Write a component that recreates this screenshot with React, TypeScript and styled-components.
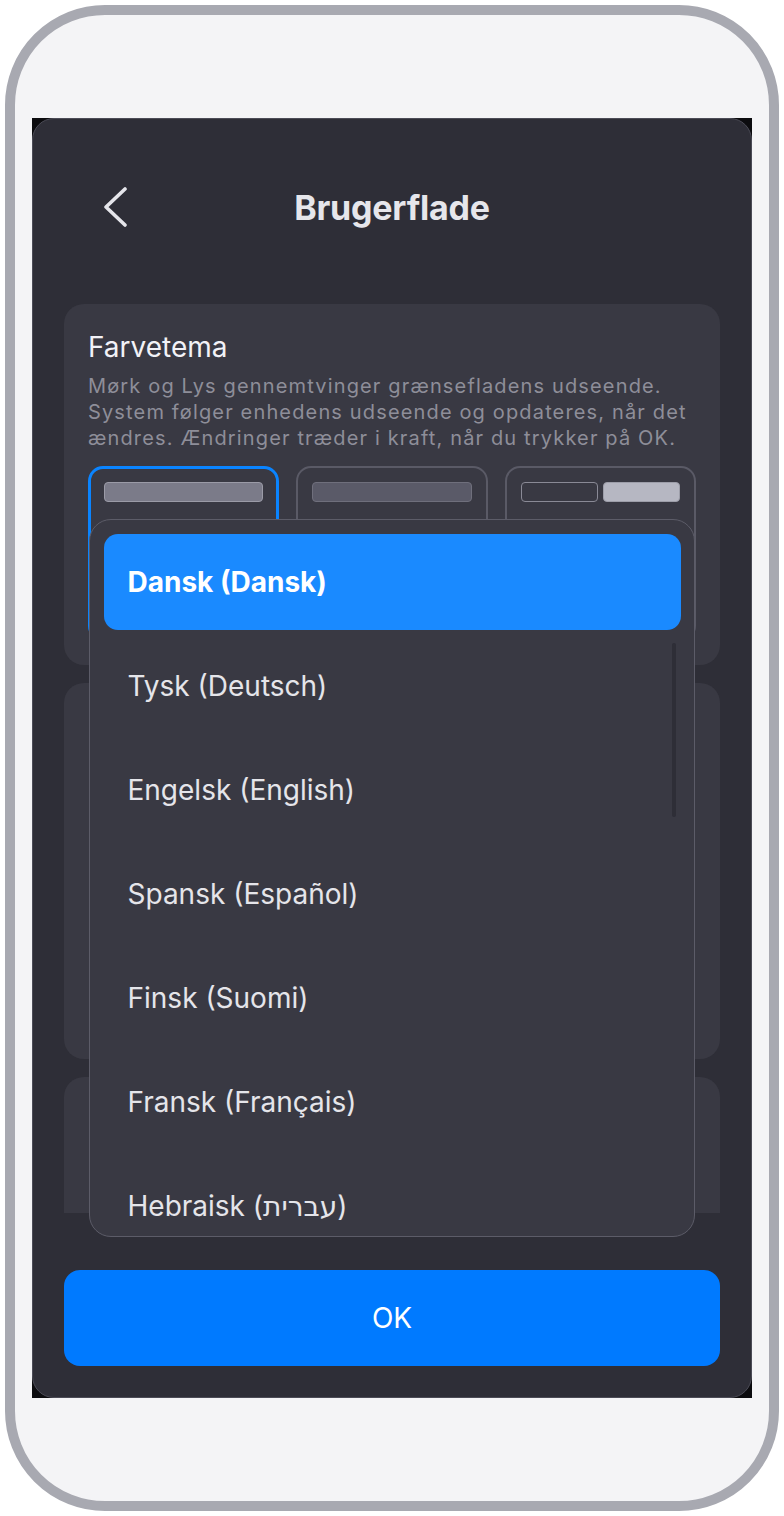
import React from 'react';
import styled, { createGlobalStyle } from 'styled-components';

const GlobalStyle = createGlobalStyle`
  html, body {
    margin: 0;
    padding: 0;
    background: #ffffff;
  }
  * {
    box-sizing: border-box;
  }
  body {
    font-family: Inter, "Noto Sans", "DejaVu Sans", sans-serif;
  }
`;

const languages = [
    'Dansk (Dansk)',
    'Tysk (Deutsch)',
    'Engelsk (English)',
    'Spansk (Español)',
    'Finsk (Suomi)',
    'Fransk (Français)',
    'Hebraisk (עברית)',
];

type Theme = 'dark' | 'light' | 'system';

const themes: { id: Theme; selected: boolean }[] = [
    { id: 'dark', selected: true },
    { id: 'light', selected: false },
    { id: 'system', selected: false },
];

export default function App() {
    return (
        <>
            <GlobalStyle />
            <PhoneFrame>
                <Screen>
                    <Panel>
                        <Header>
                            <BackButton aria-label="Tilbage">
                                <svg width="26" height="40" viewBox="0 0 26 40" fill="none">
                                    <path d="M23 2 L4 20 L23 38" stroke="#e5e5ea" strokeWidth="3.6" strokeLinecap="round" strokeLinejoin="round" />
                                </svg>
                            </BackButton>
                            <Title>Brugerflade</Title>
                            <span />
                        </Header>

                        <Scroll>
                            <Card $height={361}>
                                <CardTitle>Farvetema</CardTitle>
                                <CardText>
                                    Mørk og Lys gennemtvinger grænsefladens udseende. System følger enhedens udseende og opdateres, når det ændres. Ændringer træder i kraft, når du trykker på OK.
                                </CardText>
                                <TileGrid>
                                    {themes.map(t => (
                                        <ThemeTile key={t.id} $selected={t.selected}>
                                            {t.id === 'system' ? (
                                                <SplitBars>
                                                    <PreviewBar $fill="#393943" $edge="#8a8a96" />
                                                    <PreviewBar $fill="#b6b7c2" $edge="#9d9ea9" />
                                                </SplitBars>
                                            ) : (
                                                <PreviewBar
                                                    $fill={t.id === 'dark' ? '#7b7b89' : '#5a5a68'}
                                                    $edge={t.id === 'dark' ? '#9b9ba7' : '#6f6f7c'}
                                                />
                                            )}
                                        </ThemeTile>
                                    ))}
                                </TileGrid>
                            </Card>
                            <Card $height={376} />
                            <Card $height={376} />
                        </Scroll>

                        <OkButton>OK</OkButton>

                        <Dropdown>
                            {languages.map((l, i) => (
                                <Option key={l} $active={i === 0}>{l}</Option>
                            ))}
                            <ScrollThumb />
                        </Dropdown>
                    </Panel>
                </Screen>
            </PhoneFrame>
        </>
    );
}

const PhoneFrame = styled.div`
  margin: 5px;
  width: 774px;
  height: 1506px;
  border: 10px solid #a8a9b1;
  border-radius: 100px;
  background: #f4f4f6;
  padding: 103px 17px;
`;

const Screen = styled.div`
  width: 720px;
  height: 1280px;
  background: #0c0c0f;
`;

const Panel = styled.div`
  position: relative;
  height: 100%;
  border: 1px solid #4c4c57;
  border-radius: 22px;
  background: #2e2e37;
  display: flex;
  flex-direction: column;
  overflow: hidden;
`;

const Header = styled.div`
  height: 185px;
  flex: none;
  padding: 0 71px 9px;
  display: grid;
  grid-template-columns: 1fr auto 1fr;
  align-items: center;
`;

const BackButton = styled.button`
  justify-self: start;
  background: none;
  border: none;
  padding: 0;
  margin-left: -2px;
  display: flex;
  cursor: pointer;
`;

const Title = styled.h1`
  margin: 0;
  font-size: 34px;
  font-weight: 700;
  color: #e6e6eb;
  letter-spacing: -0.2px;
`;

const Scroll = styled.div`
  height: 909px;
  flex: none;
  padding: 0 31px;
  display: flex;
  flex-direction: column;
  gap: 18px;
  overflow: hidden;
`;

const Card = styled.section<{ $height: number }>`
  flex: none;
  height: ${p => p.$height}px;
  background: #393943;
  border-radius: 20px;
  padding: 26px 24px 24px;
  display: flex;
  flex-direction: column;
`;

const CardTitle = styled.h2`
  margin: 0;
  font-size: 28px;
  line-height: 34px;
  font-weight: 400;
  color: #f2f2f7;
`;

const CardText = styled.p`
  margin: 9px 0 0;
  font-size: 20px;
  line-height: 26px;
  letter-spacing: 1.15px;
  color: #8e8e99;
`;

const TileGrid = styled.div`
  margin-top: 15px;
  flex: 1;
  display: grid;
  grid-template-columns: repeat(3, 1fr);
  gap: 17px;
`;

const ThemeTile = styled.div<{ $selected: boolean }>`
  border-radius: 15px;
  border: ${p => (p.$selected ? '3px solid #0a84ff' : '2px solid #5a5a66')};
  padding: ${p => (p.$selected ? '13px' : '14px')};
`;

const SplitBars = styled.div`
  display: flex;
  gap: 5px;
`;

const PreviewBar = styled.div<{ $fill: string; $edge: string }>`
  flex: 1;
  height: 20px;
  border-radius: 4px;
  background: ${p => p.$fill};
  border: 1.5px solid ${p => p.$edge};
`;

const OkButton = styled.button`
  flex: none;
  margin: 57px 31px 0;
  height: 96px;
  border: none;
  border-radius: 16px;
  background: #007aff;
  color: #ffffff;
  font-family: Inter, "Noto Sans", sans-serif;
  font-size: 28px;
  font-weight: 400;
  cursor: pointer;
`;

const Dropdown = styled.div`
  position: absolute;
  left: 55.5px;
  top: 400px;
  width: 606.5px;
  height: 718px;
  padding: 13.5px 13.5px 13.5px 14px;
  border: 1.5px solid #5c5c68;
  border-radius: 22px;
  background: #393943;
  display: flex;
  flex-direction: column;
  gap: 8px;
  overflow: hidden;
`;

const Option = styled.div<{ $active: boolean }>`
  flex: none;
  height: 96px;
  padding: 0 24px;
  display: flex;
  align-items: center;
  border-radius: 14px;
  font-size: 28px;
  font-weight: ${p => (p.$active ? 700 : 400)};
  color: ${p => (p.$active ? '#ffffff' : '#e5e5ea')};
  background: ${p => (p.$active ? '#1a8aff' : 'transparent')};
`;

const ScrollThumb = styled.div`
  position: absolute;
  left: 582px;
  top: 122.5px;
  width: 4px;
  height: 174px;
  border-radius: 2px;
  background: #2e2e37;
`;
